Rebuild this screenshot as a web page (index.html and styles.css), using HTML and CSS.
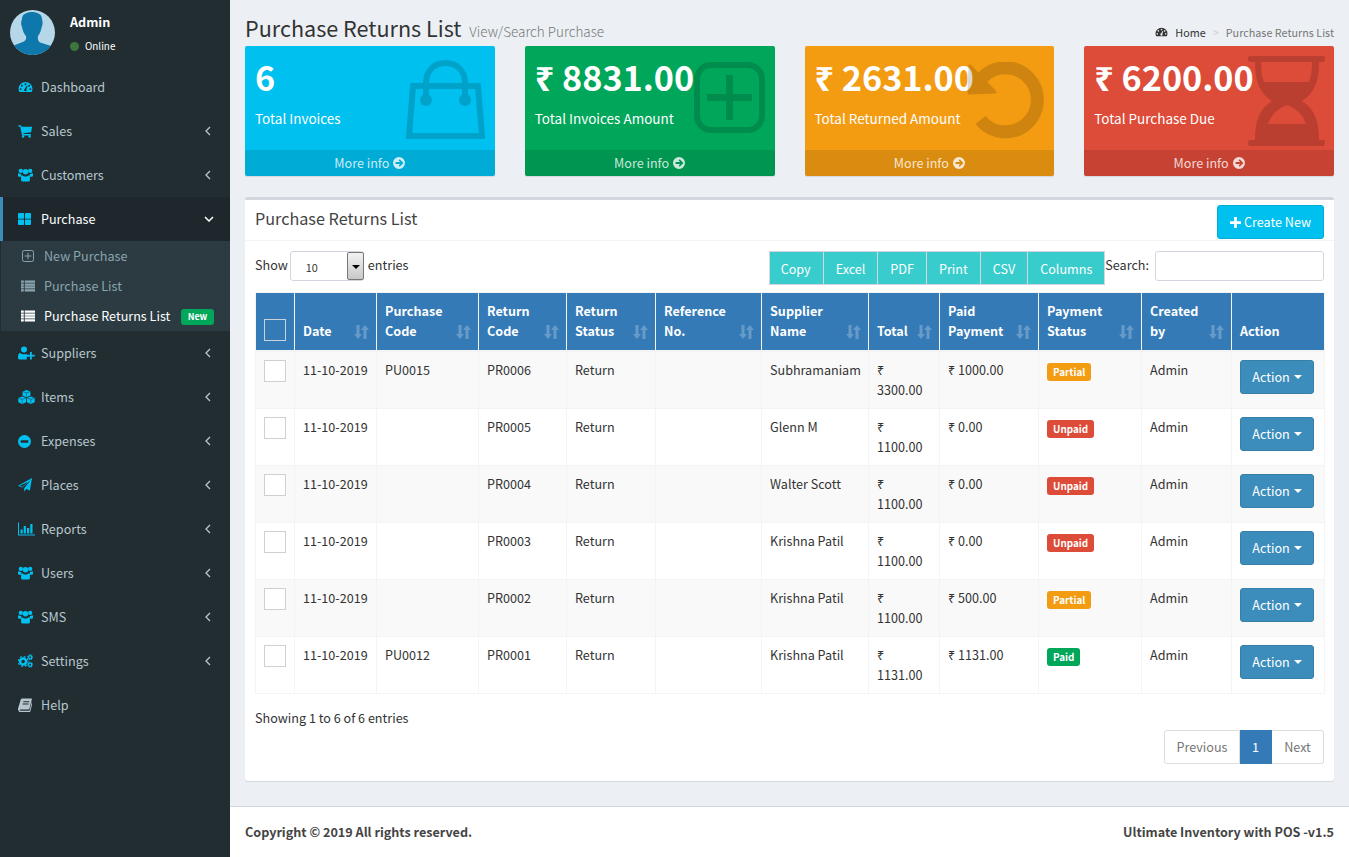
FILE: index.html
```html
<!DOCTYPE html>
<html lang="en">
<head>
<meta charset="utf-8">
<title>Purchase Returns List</title>
<link rel="stylesheet" href="styles.css">
</head>
<body>
<svg class="defs" aria-hidden="true">
  <symbol id="i-dash" viewBox="0 0 16 16"><path fill-rule="evenodd" d="M0 10a8 7.6 0 0 1 16 0c0 1.500-.4 2.700-1 3.700H1C.4 12.700 0 11.500 0 10zM8 3.700a1.100 1.100 0 1 0 0 2.200 1.100 1.100 0 0 0 0-2.200zM3.800 5.400a1.100 1.100 0 1 0 0 2.200 1.100 1.100 0 0 0 0-2.200zM12.200 5.400a1.100 1.100 0 1 0 0 2.200 1.100 1.100 0 0 0 0-2.200zM2.400 9.300a1.100 1.100 0 1 0 0 2.200 1.100 1.100 0 0 0 0-2.200zM13.600 9.300a1.100 1.100 0 1 0 0 2.200 1.100 1.100 0 0 0 0-2.200zM9.300 6.700 7.300 10a1.500 1.500 0 1 0 1.800.5L10.300 7z"/></symbol>
  <symbol id="i-cart" viewBox="0 0 16 16"><path d="M0 1.500h2.900l.4 1.500H15.500l-1.100 6.500-9 1 .2 1h8.500v1.500H4.100L2 3H0z"/><circle cx="5.200" cy="14.200" r="1.400"/><circle cx="12.700" cy="14.200" r="1.400"/></symbol>
  <symbol id="i-users" viewBox="0 0 16 14"><circle cx="3" cy="2.600" r="2.300"/><circle cx="13" cy="2.600" r="2.300"/><circle cx="8" cy="3.600" r="2.900"/><path d="M0 6c0-.6.500-1 1-1 .7.600 1.500.9 2.500.8-.2 1-.1 2 .6 3H1C.4 8.800 0 8.300 0 7.600zM16 6c0-.6-.5-1-1-1-.7.600-1.500.9-2.500.8.200 1 .1 2-.6 3H15c.6 0 1-.5 1-1.200z"/><path d="M4.600 7.200c.8.800 2 1.300 3.400 1.300s2.600-.5 3.400-1.300c.9.100 1.300 1 1.300 2.200v2.800c0 1-.7 1.600-1.500 1.600H4.800c-.8 0-1.500-.6-1.500-1.600V9.400c0-1.200.4-2.100 1.300-2.200z"/></symbol>
  <symbol id="i-th" viewBox="0 0 13 12"><path d="M0 1a1 1 0 0 1 1-1h4.500c.3 0 .5.200.5.500V5.200c0 .3-.2.500-.5.500H0zM7 .5c0-.3.200-.5.500-.5H12a1 1 0 0 1 1 1v4.700H7.500c-.3 0-.5-.2-.5-.5zM0 6.600h5.500c.3 0 .5.200.5.500V11.500c0 .3-.2.500-.5.500H1a1 1 0 0 1-1-1zM7.500 6.600H13V11a1 1 0 0 1-1 1H7.500c-.3 0-.5-.2-.5-.5V7.100c0-.3.200-.5.500-.5z"/></symbol>
  <symbol id="i-plussq" viewBox="0 0 12 12"><rect x=".5" y=".5" width="11" height="11" rx="1.800" fill="none" stroke="currentColor"/><path d="M5.500 2.800h1v2.700h2.700v1H6.500v2.700h-1V6.500H2.800v-1h2.700z"/></symbol>
  <symbol id="i-list" viewBox="0 0 15 12"><path d="M0 0h3v2.400H0zM4 0h11v2.400H4zM0 3.200h3v2.400H0zM4 3.200h11v2.400H4zM0 6.400h3v2.400H0zM4 6.400h11v2.400H4zM0 9.600h3V12H0zM4 9.600h11V12H4z"/></symbol>
  <symbol id="i-userplus" viewBox="0 0 17 13"><circle cx="6" cy="3" r="3"/><path d="M2 6.300c.9 1 2.400 1.500 4 1.500 1 0 1.900-.2 2.700-.6v1.300h2v1.800H8.700V12c0 .6.100 1 .3 1H1.500C.6 13 0 12.400 0 11.300 0 9 .5 6.900 2 6.300z"/><path d="M12 5.400h1.800v2.800h3V10h-3v3H12v-3H9.300V8.200H12z"/></symbol>
  <symbol id="i-cubes" viewBox="0 0 17 14"><path d="M8.500 0l3.900 1.400v4.400L8.500 7.300 4.600 5.800V1.400z"/><path d="M4.200 6.400 8.100 7.900v4.400L4.200 14 .3 12.300V7.900z"/><path d="M12.800 6.400 16.700 7.900v4.400L12.800 14 8.900 12.300V7.900z"/><path fill="none" stroke="#222d32" stroke-width=".5" d="M5.200 1.700 8.500 2.900l3.300-1.200M8.500 2.900v3.700M.9 8.200l3.300 1.200 3.300-1.200M4.200 9.400v3.900M9.500 8.200l3.300 1.200 3.300-1.200M12.800 9.400v3.900"/></symbol>
  <symbol id="i-minus" viewBox="0 0 13 13"><path fill-rule="evenodd" d="M6.500 0a6.500 6.500 0 1 1 0 13 6.500 6.500 0 0 1 0-13zM2.700 5.300v2.400h7.600V5.300z"/></symbol>
  <symbol id="i-plane" viewBox="0 0 14 14"><path fill-rule="evenodd" d="M14 0 11.900 12.600 8.200 11l-2 2.800v-3.500L12.600 2.200 4.200 9.500 0 7.800zM1.700 7.700l2.600 1 6-5z"/></symbol>
  <symbol id="i-chart" viewBox="0 0 17 13"><path d="M0 0h1v12h16v1H0z"/><path d="M2.500 7h2.200v4H2.500zM5.700 3.500h2.200V11H5.700zM9 5.500h2.200V11H9zM12.300 1.500h2.200V11h-2.200z"/></symbol>
  <symbol id="i-cogs" viewBox="0 0 16 14"><circle cx="5.500" cy="7.500" r="3.200" fill="none" stroke="currentColor" stroke-width="2.600"/><circle cx="5.500" cy="7.500" r="5.300" fill="none" stroke="currentColor" stroke-width="1.300" stroke-dasharray="2 2.160"/><circle cx="13" cy="3" r="1.700" fill="none" stroke="currentColor" stroke-width="1.400"/><circle cx="13" cy="3" r="2.800" fill="none" stroke="currentColor" stroke-width=".9" stroke-dasharray="1.200 1.000"/><circle cx="13" cy="11" r="1.700" fill="none" stroke="currentColor" stroke-width="1.400"/><circle cx="13" cy="11" r="2.800" fill="none" stroke="currentColor" stroke-width=".9" stroke-dasharray="1.200 1.000"/></symbol>
  <symbol id="i-book" viewBox="0 0 14 13"><path d="M4 0h9.300c.5 0 .7.400.6.800l-2.500 9.300c-.2.600-.7.900-1.200.9H2.500c-.6 0-.9.300-.9.600 0 .5.400.7.900.7h8.900l2.400-8.800v.2l.7.600-2.400 9.200c-.1.300-.4.500-.7.500H2.300C1 13 0 11.800 0 10.400c0-.3 0-.5.100-.7L2.700 1.200C3 .5 3.400 0 4 0zm1.300 2.700v1h6v-1zm-.7 2.300v1h6V5z" fill-rule="evenodd"/></symbol>
  <symbol id="i-left" viewBox="0 0 6 10"><path d="M5 1 1 5l4 4" fill="none" stroke="currentColor" stroke-width="1.300"/></symbol>
  <symbol id="i-down" viewBox="0 0 10 6"><path d="M1 1l4 4 4-4" fill="none" stroke="currentColor" stroke-width="1.500"/></symbol>
  <symbol id="i-arrow" viewBox="0 0 12 12"><path fill-rule="evenodd" d="M6 0a6 6 0 1 1 0 12A6 6 0 0 1 6 0zm.7 2.300-1.100 1.100 1.700 1.700H2.600v1.800h4.700L5.600 8.600l1.100 1.100L10.400 6z"/></symbol>
  <symbol id="i-plus" viewBox="0 0 12 12"><path d="M4.500 0h3v4.500H12v3H7.500V12h-3V7.500H0v-3h4.500z"/></symbol>
  <symbol id="i-sort" viewBox="0 0 15 14"><path d="M2.500 0h3v9h2.400L4 14 0 9h2.500zM11 0l4 5h-2.500v9h-3V5H7z"/></symbol>
  <symbol id="b-bag" viewBox="0 0 79 79"><g fill="none" stroke="currentColor" stroke-width="6"><path d="M7 26h65l4 50H3z"/><path d="M20 40V23C20 11 28 3 39.500 3S59 11 59 23v17"/></g><circle cx="20" cy="40" r="6"/><circle cx="59" cy="40" r="6"/></symbol>
  <symbol id="b-plus" viewBox="0 0 71 71"><rect x="3" y="3" width="65" height="65" rx="14" fill="none" stroke="currentColor" stroke-width="6"/><path d="M32 13h7v19h19v7H39v19h-7V39H13v-7h19z"/></symbol>
  <symbol id="b-undo" viewBox="0 0 77 77"><path d="M15 16A32 32 0 1 1 13.500 58" fill="none" stroke="currentColor" stroke-width="13"/><path d="M2 31 3 4 28 30z" stroke="currentColor" stroke-width="3" stroke-linejoin="round"/></symbol>
  <symbol id="b-hour" viewBox="0 0 77 90"><path fill-rule="evenodd" d="M2 0h73c1 0 2 1 2 3s-1 3-2 3h-4c0 18-4 31-17 39 13 8 17 21 17 39h4c1 0 2 1 2 3s-1 3-2 3H2c-1 0-2-1-2-3s1-3 2-3h5c0-18 4-31 17-39C11 37 7 24 7 6H2c-1 0-2-1-2-3s1-3 2-3zM13 6c0 6 .5 14 3 20h45c2.500-6 3-14 3-20zM39 49c-10 4-16 10-19 19h38c-3-9-9-15-19-19z"/></symbol>
</svg>

<div class="app">
  <aside class="sidebar">
    <div class="user-panel">
      <svg class="avatar" viewBox="0 0 45 45"><defs><clipPath id="av"><circle cx="22.500" cy="22.500" r="22.500"/></clipPath></defs><g clip-path="url(#av)"><rect width="45" height="45" fill="#b5d7e8"/><path fill="#0e78ac" d="M12 9c0-5 5-7 10-7s10 2 10 7c1 3 .7 6-.3 8-.5 3-2 7-3.700 9-.5 3 0 5 2 6.500 4 1.500 10 2.500 15 5V45H0v-7.500c4-3 10-4 14-6 2-1.500 2.500-3 2-5.500-2-2-3.500-6-4-9-1-2-1.300-5 0-8z"/></g></svg>
      <div class="user-info">
        <p class="user-name">Admin</p>
        <p class="user-status"><span class="dot"></span>Online</p>
      </div>
    </div>
    <nav>
      <a class="nav-item"><svg class="nav-ico w15"><use href="#i-dash"/></svg><span>Dashboard</span></a>
      <a class="nav-item"><svg class="nav-ico w15"><use href="#i-cart"/></svg><span>Sales</span><svg class="chev"><use href="#i-left"/></svg></a>
      <a class="nav-item"><svg class="nav-ico w15"><use href="#i-users"/></svg><span>Customers</span><svg class="chev"><use href="#i-left"/></svg></a>
      <a class="nav-item active"><svg class="nav-ico th"><use href="#i-th"/></svg><span>Purchase</span><svg class="chev-d"><use href="#i-down"/></svg></a>
      <div class="submenu">
        <a class="sub-item"><svg class="sub-ico sq"><use href="#i-plussq"/></svg><span>New Purchase</span></a>
        <a class="sub-item"><svg class="sub-ico"><use href="#i-list"/></svg><span>Purchase List</span></a>
        <a class="sub-item on"><svg class="sub-ico"><use href="#i-list"/></svg><span>Purchase Returns List</span><b class="pill">New</b></a>
      </div>
      <a class="nav-item"><svg class="nav-ico w17"><use href="#i-userplus"/></svg><span>Suppliers</span><svg class="chev"><use href="#i-left"/></svg></a>
      <a class="nav-item"><svg class="nav-ico w17"><use href="#i-cubes"/></svg><span>Items</span><svg class="chev"><use href="#i-left"/></svg></a>
      <a class="nav-item"><svg class="nav-ico w13"><use href="#i-minus"/></svg><span>Expenses</span><svg class="chev"><use href="#i-left"/></svg></a>
      <a class="nav-item"><svg class="nav-ico w14"><use href="#i-plane"/></svg><span>Places</span><svg class="chev"><use href="#i-left"/></svg></a>
      <a class="nav-item"><svg class="nav-ico w17"><use href="#i-chart"/></svg><span>Reports</span><svg class="chev"><use href="#i-left"/></svg></a>
      <a class="nav-item"><svg class="nav-ico w15"><use href="#i-users"/></svg><span>Users</span><svg class="chev"><use href="#i-left"/></svg></a>
      <a class="nav-item"><svg class="nav-ico w15"><use href="#i-users"/></svg><span>SMS</span><svg class="chev"><use href="#i-left"/></svg></a>
      <a class="nav-item"><svg class="nav-ico w15"><use href="#i-cogs"/></svg><span>Settings</span><svg class="chev"><use href="#i-left"/></svg></a>
      <a class="nav-item help"><svg class="nav-ico w14"><use href="#i-book"/></svg><span>Help</span></a>
    </nav>
  </aside>

  <div class="main">
    <main class="content">
      <header class="page-head">
        <h1>Purchase Returns List <small>View/Search Purchase</small></h1>
        <ol class="crumb">
          <li class="home"><svg class="crumb-ico"><use href="#i-dash"/></svg>Home</li>
          <li class="sep">&gt;</li>
          <li class="cur">Purchase Returns List</li>
        </ol>
      </header>

      <section class="stats">
        <div class="stat cyan">
          <div class="stat-body"><h3>6</h3><p>Total Invoices</p></div>
          <svg class="stat-ico bag"><use href="#b-bag"/></svg>
          <a class="stat-foot">More info <svg class="foot-ico"><use href="#i-arrow"/></svg></a>
        </div>
        <div class="stat green">
          <div class="stat-body"><h3>₹ 8831.00</h3><p>Total Invoices Amount</p></div>
          <svg class="stat-ico plus"><use href="#b-plus"/></svg>
          <a class="stat-foot">More info <svg class="foot-ico"><use href="#i-arrow"/></svg></a>
        </div>
        <div class="stat orange">
          <div class="stat-body"><h3>₹ 2631.00</h3><p>Total Returned Amount</p></div>
          <svg class="stat-ico undo"><use href="#b-undo"/></svg>
          <a class="stat-foot">More info <svg class="foot-ico"><use href="#i-arrow"/></svg></a>
        </div>
        <div class="stat red">
          <div class="stat-body"><h3>₹ 6200.00</h3><p>Total Purchase Due</p></div>
          <svg class="stat-ico hour"><use href="#b-hour"/></svg>
          <a class="stat-foot">More info <svg class="foot-ico"><use href="#i-arrow"/></svg></a>
        </div>
      </section>

      <section class="card">
        <div class="card-head">
          <h2>Purchase Returns List</h2>
          <a class="btn-new"><svg class="new-ico"><use href="#i-plus"/></svg>Create New</a>
        </div>
        <div class="card-body">
          <div class="toolbar">
            <div class="length">Show <span class="select"><span class="select-val">10</span><span class="select-btn"></span></span> entries</div>
            <div class="tools">
              <div class="btn-group"><a>Copy</a><a>Excel</a><a>PDF</a><a>Print</a><a>CSV</a><a>Columns</a></div>
              <label class="search">Search:<span class="search-box"></span></label>
            </div>
          </div>

          <table class="grid">
            <colgroup><col class="c1"><col class="c2"><col class="c3"><col class="c4"><col class="c5"><col class="c6"><col class="c7"><col class="c8"><col class="c9"><col class="c10"><col class="c11"><col class="c12"></colgroup>
            <thead>
              <tr>
                <th><span class="check head"></span></th>
                <th>Date<svg class="sort"><use href="#i-sort"/></svg></th>
                <th>Purchase<br>Code<svg class="sort"><use href="#i-sort"/></svg></th>
                <th>Return<br>Code<svg class="sort"><use href="#i-sort"/></svg></th>
                <th>Return<br>Status<svg class="sort"><use href="#i-sort"/></svg></th>
                <th>Reference<br>No.<svg class="sort"><use href="#i-sort"/></svg></th>
                <th>Supplier<br>Name<svg class="sort"><use href="#i-sort"/></svg></th>
                <th>Total<svg class="sort"><use href="#i-sort"/></svg></th>
                <th>Paid<br>Payment<svg class="sort"><use href="#i-sort"/></svg></th>
                <th>Payment<br>Status<svg class="sort"><use href="#i-sort"/></svg></th>
                <th>Created<br>by<svg class="sort"><use href="#i-sort"/></svg></th>
                <th>Action</th>
              </tr>
            </thead>
            <tbody>
              <tr><td><span class="check"></span></td><td>11-10-2019</td><td>PU0015</td><td>PR0006</td><td>Return</td><td></td><td>Subhramaniam</td><td>₹<br>3300.00</td><td>₹ 1000.00</td><td><span class="tag partial">Partial</span></td><td>Admin</td><td class="act"><a class="btn-act">Action <i class="caret"></i></a></td></tr>
              <tr><td><span class="check"></span></td><td>11-10-2019</td><td></td><td>PR0005</td><td>Return</td><td></td><td>Glenn M</td><td>₹<br>1100.00</td><td>₹ 0.00</td><td><span class="tag unpaid">Unpaid</span></td><td>Admin</td><td class="act"><a class="btn-act">Action <i class="caret"></i></a></td></tr>
              <tr><td><span class="check"></span></td><td>11-10-2019</td><td></td><td>PR0004</td><td>Return</td><td></td><td>Walter Scott</td><td>₹<br>1100.00</td><td>₹ 0.00</td><td><span class="tag unpaid">Unpaid</span></td><td>Admin</td><td class="act"><a class="btn-act">Action <i class="caret"></i></a></td></tr>
              <tr><td><span class="check"></span></td><td>11-10-2019</td><td></td><td>PR0003</td><td>Return</td><td></td><td>Krishna Patil</td><td>₹<br>1100.00</td><td>₹ 0.00</td><td><span class="tag unpaid">Unpaid</span></td><td>Admin</td><td class="act"><a class="btn-act">Action <i class="caret"></i></a></td></tr>
              <tr><td><span class="check"></span></td><td>11-10-2019</td><td></td><td>PR0002</td><td>Return</td><td></td><td>Krishna Patil</td><td>₹<br>1100.00</td><td>₹ 500.00</td><td><span class="tag partial">Partial</span></td><td>Admin</td><td class="act"><a class="btn-act">Action <i class="caret"></i></a></td></tr>
              <tr><td><span class="check"></span></td><td>11-10-2019</td><td>PU0012</td><td>PR0001</td><td>Return</td><td></td><td>Krishna Patil</td><td>₹<br>1131.00</td><td>₹ 1131.00</td><td><span class="tag paid">Paid</span></td><td>Admin</td><td class="act"><a class="btn-act">Action <i class="caret"></i></a></td></tr>
            </tbody>
          </table>

          <p class="info">Showing 1 to 6 of 6 entries</p>
          <div class="pager"><a class="prev">Previous</a><a class="cur">1</a><a class="next">Next</a></div>
        </div>
      </section>
    </main>
    <footer class="foot">
      <strong>Copyright © 2019 All rights reserved.</strong>
      <strong>Ultimate Inventory with POS -v1.5</strong>
    </footer>
  </div>
</div>
</body>
</html>
```

FILE: styles.css
```css
* { box-sizing: border-box; }
html, body { margin: 0; height: 100%; }
body {
  font-family: "Noto Sans CJK SC", "Noto Sans", "Open Sans", sans-serif;
  font-size: 12.6px;
  line-height: 20px;
  color: #333;
  background: #ecf0f5;
  overflow: hidden;
}
.defs { position: absolute; width: 0; height: 0; }
svg { fill: currentColor; display: block; }
p, h1, h2, h3, ol { margin: 0; padding: 0; }

.app { display: flex; height: 857px; }

/* sidebar */
.sidebar { width: 230px; flex: none; background: #222d32; color: #b8c7ce; }
.user-panel { height: 65px; padding: 10px; display: flex; }
.avatar { width: 45px; height: 45px; flex: none; }
.user-info { margin-left: 15px; }
.user-name { font-weight: 700; color: #fff; line-height: 20px; margin-top: 2px; }
.user-status { display: flex; align-items: center; font-size: 9.9px; color: #fff; line-height: 14px; margin-top: 7px; }
.dot { width: 9px; height: 9px; border-radius: 50%; background: #3c763d; margin-right: 6px; }

.nav-item { display: flex; align-items: center; height: 44px; padding-left: 18px; position: relative; }
.nav-item span { position: absolute; left: 41px; }
.nav-ico { height: 14px; width: 15px; color: #00c0ef; flex: none; }
.nav-ico.w13 { width: 13px; height: 13px; }
.nav-ico.w14 { width: 14px; }
.nav-ico.w17 { width: 17px; }
.nav-ico.th { width: 13px; height: 12px; }
.chev { position: absolute; right: 19px; top: 17px; width: 6px; height: 10px; }
.chev-d { position: absolute; right: 16px; top: 19px; width: 10px; height: 6px; color: #fff; }
.nav-item.active { background: #1e282c; color: #fff; border-left: 3px solid #3c8dbc; padding-left: 15px; }
.nav-item.active span { left: 38px; }
.nav-item.help .nav-ico { color: #b8c7ce; }

.submenu { background: #2c3b41; margin-left: 1px; height: 90px; }
.sub-item { display: flex; align-items: center; height: 30px; padding-left: 20px; color: #8aa4af; position: relative; white-space: nowrap; }
.sub-item span { position: absolute; left: 43px; }
.sub-ico { width: 14px; height: 12px; }
.sub-ico.sq { width: 12px; height: 12px; margin-left: 1px; }
.sub-item.on { color: #fff; }
.pill { position: absolute; left: 180px; top: 8px; width: 33px; height: 16px; border-radius: 3px; background: #00a65a; color: #fff; font-size: 9px; line-height: 16px; text-align: center; }

/* main */
.main { flex: 1; min-width: 0; display: flex; flex-direction: column; }
.content { flex: 1; padding: 0 15px; }

.page-head { height: 46px; display: flex; justify-content: space-between; }
.page-head h1 { font-size: 21.6px; font-weight: 400; line-height: 30px; margin-top: 13px; color: #333; white-space: nowrap; }
.page-head small { font-size: 13.5px; color: #777; font-weight: 300; margin-left: 3px; }
.crumb { list-style: none; display: flex; font-size: 10.8px; margin-top: 18px; line-height: 20px; }
.crumb li { display: flex; align-items: center; }
.crumb-ico { width: 13px; height: 12px; margin-right: 7px; }
.crumb .sep { color: #ccc; margin: 0 7px; }
.crumb .cur { color: #777; }

.stats { display: grid; grid-template-columns: repeat(4, 1fr); column-gap: 30px; height: 130px; }
.stat { position: relative; border-radius: 2px; color: #fff; box-shadow: 0 1px 1px rgba(0,0,0,.1); overflow: hidden; display: flex; flex-direction: column; }
.stat-body { height: 104px; padding: 10px; }
.stat h3 { font-size: 34.2px; font-weight: 700; line-height: 40px; white-space: nowrap; }
.stat p { font-size: 13.5px; line-height: 20px; margin-top: 12px; }
.stat-foot { height: 26px; line-height: 26px; background: rgba(0,0,0,.1); color: rgba(255,255,255,.8); display: flex; justify-content: center; align-items: center; gap: 4px; }
.foot-ico { width: 12px; height: 12px; }
.stat-ico { position: absolute; color: #000; opacity: .15; }
.stat-ico.bag { width: 79px; height: 79px; right: 10px; top: 14px; }
.stat-ico.plus { width: 71px; height: 71px; right: 10px; top: 16px; }
.stat-ico.undo { width: 77px; height: 77px; right: 10px; top: 16px; }
.stat-ico.hour { width: 77px; height: 90px; right: 9px; top: 10px; }
.cyan { background: #00c0ef; }
.green { background: #00a65a; }
.orange { background: #f39c12; }
.red { background: #dd4b39; }

.card { margin-top: 21px; background: #fff; border-top: 3px solid #d2d6de; border-radius: 3px; box-shadow: 0 1px 1px rgba(0,0,0,.1); height: 584px; }
.card-head { height: 41px; padding: 5px 10px 0; border-bottom: 1px solid #f4f4f4; display: flex; justify-content: space-between; }
.card-head h2 { font-size: 16.2px; font-weight: 400; line-height: 26px; color: #444; }
.btn-new { width: 107px; height: 34px; background: #00c0ef; border: 1px solid #00acd6; border-radius: 3px; color: #fff; display: flex; align-items: center; justify-content: center; gap: 3px; }
.new-ico { width: 11px; height: 11px; }
.card-body { padding: 10px; }

.toolbar { display: flex; justify-content: space-between; height: 34px; }
.length { display: flex; align-items: flex-start; gap: 2px; line-height: 28px; }
.select { width: 74px; height: 30px; border: 1px solid #d2d6de; border-radius: 3px; display: flex; justify-content: space-between; margin-right: 2px; }
.select-val { font-size: 10.8px; line-height: 30px; padding-left: 15px; }
.select-btn { width: 17px; height: 28px; margin-right: -1px; border: 1px solid #777; border-radius: 2px; background: linear-gradient(#f2f2f2, #c8c8c8); position: relative; }
.select-btn::after { content: ""; position: absolute; left: 4px; top: 12px; border: 4px solid transparent; border-top: 4px solid #000; border-bottom: 0; }
.tools { display: flex; align-items: flex-start; }
.btn-group { display: flex; height: 34px; border: 1px solid #d2d6de; background: #39cccc; color: #fff; }
.btn-group a { padding: 1px 12px 0; line-height: 32px; border-left: 1px solid #d2d6de; }
.btn-group a:first-child { border-left: 0; padding-left: 11px; }
.search { display: flex; line-height: 28px; gap: 6px; }
.search-box { width: 169px; height: 30px; border: 1px solid #d2d6de; border-radius: 3px; display: block; }

.grid { margin-top: 7px; width: 1069px; table-layout: fixed; border-collapse: collapse; border: 1px solid #f4f4f4; }
.c1 { width: 39px; } .c2 { width: 82px; } .c3 { width: 102px; } .c4 { width: 88px; }
.c5 { width: 89px; } .c6 { width: 106px; } .c7 { width: 107px; } .c8 { width: 71px; }
.c9 { width: 99px; } .c10 { width: 103px; } .c11 { width: 90px; } .c12 { width: 93px; }
.grid th { background: #337ab7; color: #fff; text-align: left; vertical-align: bottom; padding: 8px 8px 9px; font-weight: 700; border: 1px solid #f4f4f4; border-bottom-width: 2px; position: relative; }
.grid td { padding: 8px; border: 1px solid #f4f4f4; vertical-align: top; white-space: nowrap; }
.grid tbody tr:nth-child(odd) { background: #f9f9f9; }
.sort { position: absolute; right: 7px; bottom: 11px; width: 15px; height: 14px; color: rgba(255,255,255,.25); }
.check { display: block; width: 22px; height: 22px; border: 1px solid #d2d0ca; background: #fff; }
.check.head { background: transparent; border-color: #c9d3dc; }
.tag { display: inline-block; height: 18px; line-height: 18px; padding: 0 6px; border-radius: 3px; color: #fff; font-size: 9.9px; font-weight: 700; margin-top: 3px; vertical-align: top; }
.partial { background: #f39c12; }
.unpaid { background: #dd4b39; }
.paid { background: #00a65a; }
.btn-act { display: flex; width: 74px; height: 34px; background: #3c8dbc; border: 1px solid #367fa9; border-radius: 3px; color: #fff; align-items: center; justify-content: center; gap: 4px; }
.caret { width: 0; height: 0; border: 4px solid transparent; border-top: 4px solid #fff; border-bottom: 0; }

.info { margin-top: 14px; line-height: 20px; }
.pager { display: flex; justify-content: flex-end; margin-top: 2px; }
.pager a { height: 34px; line-height: 32px; border: 1px solid #ddd; border-left-width: 0; text-align: center; color: #777; }
.pager .prev { width: 76px; border-left-width: 1px; border-radius: 3px 0 0 3px; }
.pager .next { width: 52px; border-radius: 0 3px 3px 0; }
.pager .cur { width: 32px; background: #337ab7; border-color: #337ab7; color: #fff; }

.foot { height: 51px; background: #fff; border-top: 1px solid #d2d6de; padding: 0 15px; display: flex; justify-content: space-between; align-items: center; color: #444; }
.foot strong { font-weight: 700; }
```
